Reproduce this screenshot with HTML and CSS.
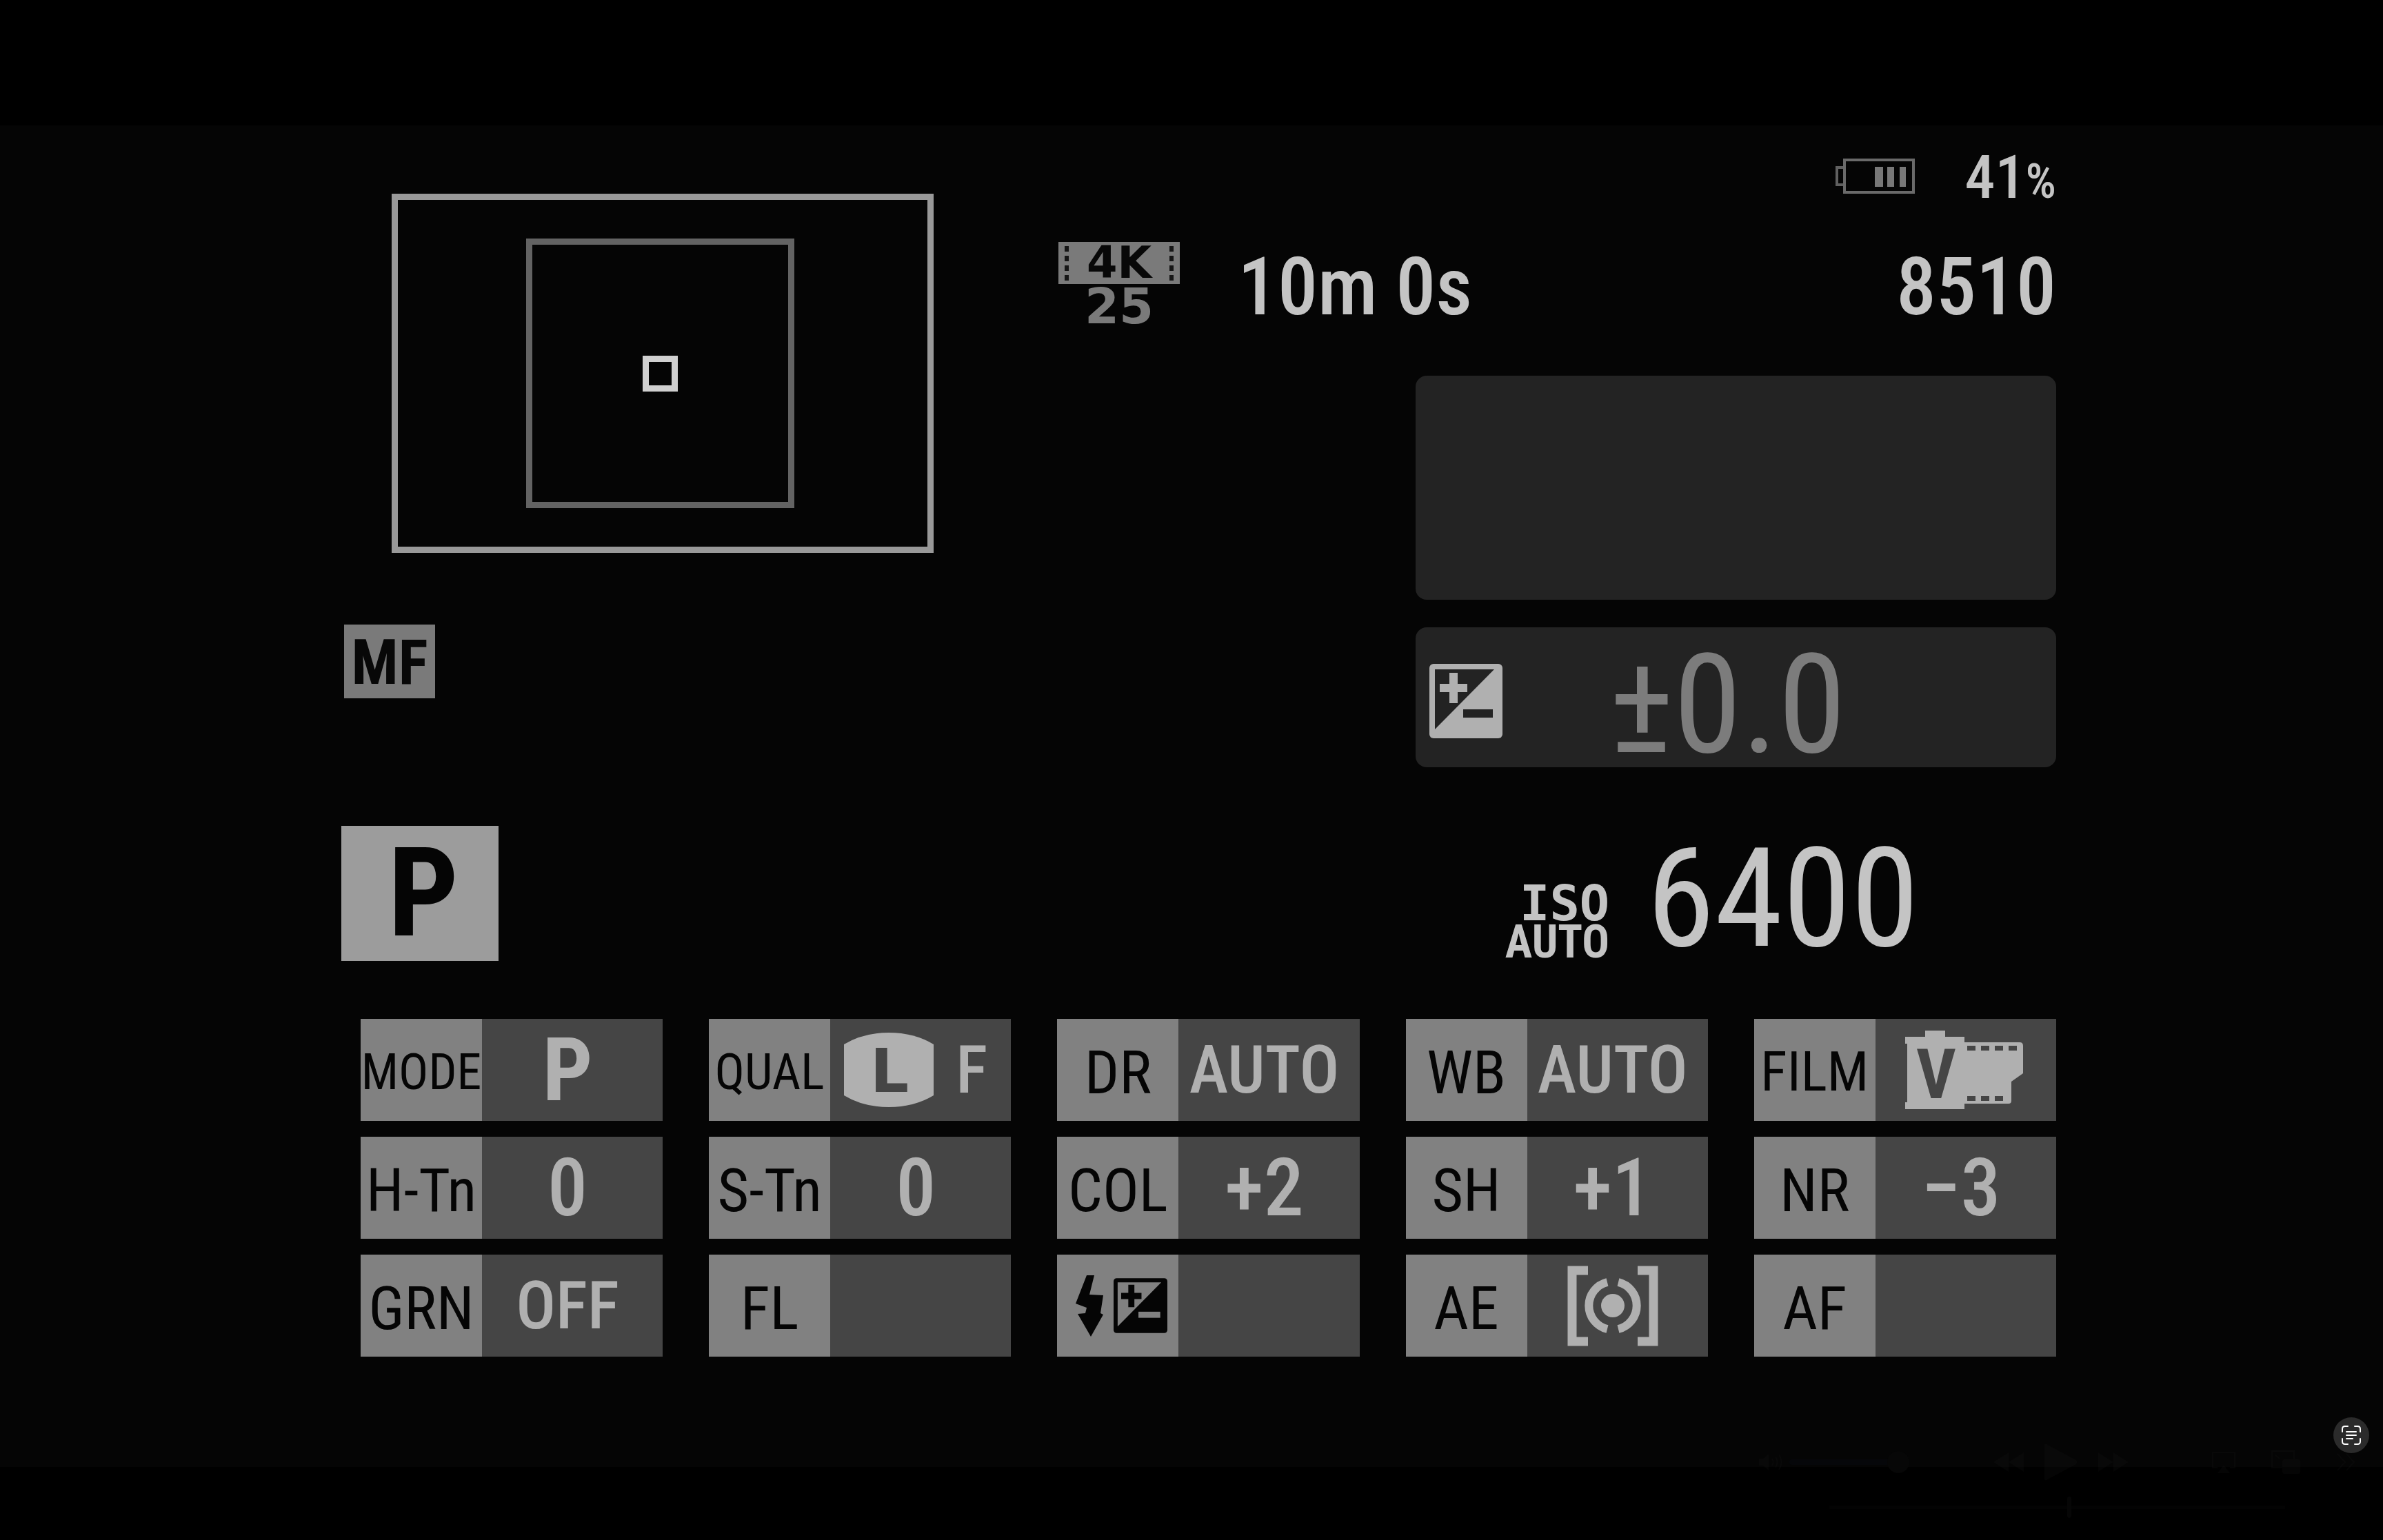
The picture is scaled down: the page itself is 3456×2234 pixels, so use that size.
FILE: index.html
```html
<!DOCTYPE html>
<html lang="en">
<head>
<meta charset="utf-8">
<title>Camera info display</title>
<link rel="stylesheet" href="styles.css">
</head>
<body>
<svg class="defs" aria-hidden="true">
  <symbol id="ev" viewBox="0 0 106 108">
    <rect width="106" height="108" rx="6" fill="currentColor"/>
    <path class="hole" d="M8 8H94L8 95Z"/>
    <path d="M15 35H55M35 13V57" stroke="currentColor" stroke-width="12"/>
    <rect class="hole" x="49" y="66" width="43" height="12"/>
  </symbol>
</svg>

<main class="screen">
  <section class="upper">
    <div class="focus">
      <div class="frame"><div class="frame-inner"><div class="frame-point"></div></div></div>
      <div class="mf">MF</div>
    </div>
    <div class="readouts">
      <div class="battery-row">
        <svg class="battery" width="116" height="54" viewBox="0 0 116 54" fill="none" role="img" aria-label="Battery">
          <path d="M14 14H3V39H14" stroke="#606060" stroke-width="4"/>
          <rect x="14" y="3" width="100" height="47" stroke="#6a6a6a" stroke-width="4"/>
          <path d="M58 13h12v29h-12zM76 13h10v29h-10zM94 13h9v29h-9z" fill="#787878"/>
        </svg>
        <div class="charge">41<span class="percent">%</span></div>
      </div>
      <div class="record-row">
        <div class="movie">
          <div class="movie-badge">
            <svg width="6" height="50" viewBox="0 0 6 50"><path d="M0 0h6v8H0zM0 14h6v8H0zM0 28h6v8H0zM0 42h6v8H0z" fill="#161616"/></svg>
            <span>4K</span>
            <svg width="6" height="50" viewBox="0 0 6 50"><path d="M0 0h6v8H0zM0 14h6v8H0zM0 28h6v8H0zM0 42h6v8H0z" fill="#161616"/></svg>
          </div>
          <div class="movie-rate">25</div>
        </div>
        <div class="remaining">10m 0s</div>
        <div class="shots">8510</div>
      </div>
      <div class="panel panel-histogram"></div>
      <div class="panel panel-ev">
        <svg class="ev-icon" width="106" height="108"><use href="#ev"/></svg>
        <div class="ev-value">±0.0</div>
      </div>
    </div>
  </section>

  <section class="exposure">
    <div class="mode">P</div>
    <div class="iso">
      <div class="iso-label"><span class="iso-name">ISO</span><span class="iso-auto">AUTO</span></div>
      <div class="iso-value">6400</div>
    </div>
  </section>

  <dl class="settings">
    <div class="item"><dt class="compact">MODE</dt><dd class="strong">P</dd></div>
    <div class="item"><dt class="compact">QUAL</dt><dd class="quality">
      <svg width="130" height="108" viewBox="0 0 130 108"><path d="M0 17Q28 0 65 0T130 17V91Q102 108 65 108T0 91Z" fill="#b0b0b0"/><text class="size-letter" x="66" y="86" text-anchor="middle">L</text></svg>
      <span>F</span></dd></div>
    <div class="item"><dt>DR</dt><dd>AUTO</dd></div>
    <div class="item"><dt>WB</dt><dd>AUTO</dd></div>
    <div class="item"><dt class="medium">FILM</dt><dd class="film">
      <svg width="171" height="114" viewBox="0 0 171 114"><path d="M0 9H29V0H58V9H86V17H166Q171 17 171 22V62L154 74V102Q154 106 150 106H86V114H0V104H3V19H0Z" fill="#b0b0b0"/><path d="M90 22h12v7H90zM110 22h12v7h-12zM130 22h12v7h-12zM150 22h12v7h-12zM90 95h12v7H90zM110 95h12v7h-12zM130 95h12v7h-12z" fill="#454545"/><text class="film-letter" x="45" y="98" text-anchor="middle">V</text></svg></dd></div>

    <div class="item"><dt>H-Tn</dt><dd class="number">0</dd></div>
    <div class="item"><dt>S-Tn</dt><dd class="number">0</dd></div>
    <div class="item"><dt>COL</dt><dd class="number">+2</dd></div>
    <div class="item"><dt>SH</dt><dd class="number">+1</dd></div>
    <div class="item"><dt>NR</dt><dd class="number">−3</dd></div>

    <div class="item"><dt>GRN</dt><dd>OFF</dd></div>
    <div class="item"><dt>FL</dt><dd></dd></div>
    <div class="item"><dt class="flash">
      <svg width="40" height="89" viewBox="0 0 40 89"><path d="M16 0H27L20 28L40 29L36 55L40 57L22 89L3 56L14 55L16 47L0 41Z" fill="currentColor"/></svg>
      <svg width="78" height="82"><use href="#ev"/></svg></dt><dd></dd></div>
    <div class="item"><dt>AE</dt><dd>
      <svg width="132" height="115" viewBox="0 0 132 115" fill="none" stroke="#b0b0b0"><path d="M30 6H7V109H30M102 6H125V109H102" stroke-width="13"/><path d="M58 23A35 35 0 0 0 58 91M74 23A35 35 0 0 1 74 91" stroke-width="12"/><circle cx="66" cy="57" r="17" fill="#b0b0b0" stroke="none"/></svg></dd></div>
    <div class="item"><dt>AF</dt><dd></dd></div>
  </dl>
</main>

<section class="player" aria-label="Playback">
  <div class="player-row">
    <div class="volume">
      <svg width="34" height="26" viewBox="0 0 34 26" fill="none" stroke="currentColor" stroke-width="2"><path d="M0 8H6L14 1V25L6 18H0Z" fill="currentColor" stroke="none"/><path d="M19 8Q22 13 19 18M24 5Q29 13 24 21M29 2Q36 13 29 24"/></svg>
      <input class="volume-slider" type="range" min="0" max="100" value="100" aria-label="Volume">
    </div>
    <div class="transport">
      <button aria-label="Rewind"><svg width="44" height="28" viewBox="0 0 44 28"><path d="M22 0V28L0 14ZM44 0V28L22 14Z" fill="currentColor"/></svg></button>
      <button aria-label="Play"><svg width="48" height="54" viewBox="0 0 48 54"><path d="M0 2Q0 0 3 1L46 24Q49 27 46 30L3 53Q0 54 0 52Z" fill="currentColor"/></svg></button>
      <button aria-label="Forward"><svg width="44" height="28" viewBox="0 0 44 28"><path d="M0 0V28L22 14ZM22 0V28L44 14Z" fill="currentColor"/></svg></button>
    </div>
    <div class="extras">
      <button aria-label="AirPlay"><svg width="34" height="32" viewBox="0 0 34 32"><path d="M8 24H1V2H33V24H26" fill="none" stroke="currentColor" stroke-width="2"/><path d="M17 20L26 32H8Z" fill="currentColor"/></svg></button>
      <button aria-label="Picture in picture"><svg width="42" height="34" viewBox="0 0 42 34"><path d="M16 25H1V1H33V12M5 6L12 12" fill="none" stroke="currentColor" stroke-width="2"/><rect x="16" y="13" width="26" height="21" rx="3" fill="currentColor"/></svg></button>
      <button aria-label="More"><svg width="28" height="28" viewBox="0 0 28 28"><path d="M2 2L13 14L2 26M15 2L26 14L15 26" fill="none" stroke="currentColor" stroke-width="2"/></svg></button>
    </div>
  </div>
  <div class="player-row timeline">
    <span>02:00</span>
    <input class="seek" type="range" min="0" max="228" value="120" aria-label="Position">
    <span>03:48</span>
  </div>
</section>

<button class="scan" aria-label="Scan text">
  <svg width="28" height="28" viewBox="0 0 28 28" fill="none" stroke="#fff" stroke-width="2" stroke-linecap="round"><path d="M1 9V5Q1 1 5 1H9M19 1H23Q27 1 27 5V9M27 19V23Q27 27 23 27H19M9 27H5Q1 27 1 23V19M7 9H21M7 14H21M7 19H16"/></svg>
</button>
</body>
</html>
```
FILE: styles.css
```css
:root {
  --narrow: "Roboto Condensed", "Liberation Sans Narrow", "DejaVu Sans Condensed", sans-serif;
  --wide: "DejaVu Sans", sans-serif;
  --hole: #232323;
}

* {
  box-sizing: border-box;
}

body {
  position: relative;
  display: flex;
  flex-direction: column;
  min-height: 100vh;
  margin: 0;
  padding: 182px 0 108px;
  background: #000;
  color: #c4c4c4;
  font-family: var(--narrow);
}

.defs {
  position: absolute;
  width: 0;
  height: 0;
}

.hole {
  fill: var(--hole);
}

button {
  display: block;
  padding: 0;
  border: 0;
  background: none;
  color: inherit;
}

svg {
  display: block;
  flex: none;
  overflow: visible;
}

.screen {
  flex: 1;
  padding: 24px 474px 160px 495px;
  background: #050505;
}

.upper {
  display: flex;
  gap: 180px;
}

.focus {
  flex: none;
  padding-top: 75px;
}

.frame,
.frame-inner {
  display: flex;
  align-items: center;
  justify-content: center;
}

.frame {
  width: 786px;
  height: 521px;
  margin: 0 1px 0 73px;
  padding-right: 8px;
  border: 9px solid #999;
}

.frame-inner {
  width: 389px;
  height: 391px;
  border: 9px solid #636363;
}

.frame-point {
  width: 51px;
  height: 52px;
  border: 9px solid #d0d0d0;
}

.mf {
  width: 132px;
  margin: 104px 0 0 4px;
  padding-top: 4px;
  background: #7a7a7a;
  color: #080808;
  font-size: 90px;
  font-weight: 700;
  line-height: 103px;
  text-align: center;
}

.readouts {
  display: flex;
  flex: 1;
  flex-direction: column;
}

.battery-row {
  display: flex;
  align-items: center;
  justify-content: flex-end;
  gap: 72px;
  height: 100px;
}

.charge {
  padding-top: 8px;
  font-size: 88px;
  font-weight: 500;
  line-height: 92px;
}

.percent {
  font-size: 70px;
}

.record-row {
  display: flex;
  align-items: center;
  height: 122px;
  margin-top: 45px;
}

.movie {
  color: #7a7a7a;
  font-family: var(--wide);
  font-weight: 700;
  line-height: 61px;
  text-align: center;
}

.movie-badge {
  display: flex;
  align-items: center;
  justify-content: space-between;
  width: 176px;
  padding: 0 9px;
  background: #7a7a7a;
  color: #080808;
  font-size: 64px;
}

.movie-rate {
  padding-top: 4px;
  font-size: 72px;
  line-height: 57px;
}

.remaining,
.shots {
  padding-top: 8px;
  font-size: 116px;
  font-weight: 500;
  line-height: 114px;
}

.remaining {
  margin-left: 84px;
}

.shots {
  margin-left: auto;
}

.panel {
  align-self: flex-end;
  width: 929px;
  border-radius: 16px;
  background: #232323;
}

.panel-histogram {
  height: 325px;
  margin-top: 72px;
}

.panel-ev {
  display: flex;
  align-items: center;
  height: 203px;
  margin-top: 40px;
  padding: 10px 0 0 20px;
}

.ev-icon {
  color: #b0b0b0;
}

.ev-value {
  margin-left: 154px;
  padding-top: 12px;
  color: #7c7c7c;
  font-size: 200px;
  line-height: 180px;
}

.exposure {
  display: flex;
  justify-content: space-between;
  margin-top: 85px;
}

.mode {
  width: 228px;
  padding-left: 10px;
  background: #9c9c9c;
  color: #050505;
  font-size: 180px;
  font-weight: 700;
  line-height: 196px;
  text-align: center;
}

.iso {
  display: flex;
  align-items: flex-end;
  gap: 54px;
  margin-right: 199px;
}

.iso-label {
  display: grid;
  justify-items: end;
  font-weight: 700;
}

.iso-name {
  font-family: "DejaVu Sans Mono", monospace;
  font-size: 72px;
  line-height: 60px;
}

.iso-auto {
  font-size: 66px;
  line-height: 54px;
}

.iso-value {
  font-size: 200px;
  line-height: 180px;
}

.settings {
  display: grid;
  grid-template-columns: repeat(5, 1fr);
  gap: 23px 67px;
  margin: 84px 0 0 28px;
}

.item {
  display: flex;
  height: 148px;
}

dt,
dd {
  display: flex;
  align-items: center;
  justify-content: center;
  margin: 0;
}

dt {
  width: 176px;
  padding-top: 6px;
  background: #818181;
  color: #050505;
  font-size: 88px;
}

.medium {
  font-size: 80px;
}

.compact {
  font-size: 72px;
}

dd {
  flex: 1;
  padding-right: 14px;
  background: #454545;
  color: #b0b0b0;
  font-size: 96px;
  font-weight: 500;
}

.number {
  font-size: 116px;
}

.strong {
  font-size: 128px;
  font-weight: 700;
}

.quality {
  gap: 32px;
}

.film {
  padding-right: 4px;
}

.size-letter {
  fill: #454545;
  font-family: var(--wide);
  font-size: 88px;
  font-weight: 700;
}

.film-letter {
  fill: #454545;
  font-size: 100px;
  font-weight: 700;
}

.flash {
  --hole: #818181;
  gap: 15px;
  padding: 0 0 0 10px;
}

.player {
  position: absolute;
  right: 16px;
  bottom: 18px;
  width: 913px;
  padding: 21px 24px 16px;
  border-radius: 20px;
  color: rgba(255, 255, 255, 0.02);
}

.player-row {
  display: flex;
  align-items: center;
  justify-content: space-between;
}

.volume,
.transport,
.extras {
  display: flex;
  align-items: center;
}

.volume {
  gap: 10px;
}

.transport {
  gap: 30px;
}

.extras {
  gap: 52px;
}

.volume-slider,
.seek {
  margin: 0;
  appearance: none;
  background: rgba(255, 255, 255, 0.01);
}

.volume-slider {
  width: 174px;
  height: 8px;
  border-radius: 4px;
  background: #06070a;
}

.volume-slider::-webkit-slider-thumb {
  width: 32px;
  height: 32px;
  border-radius: 16px;
  appearance: none;
  background: #070707;
}

.timeline {
  gap: 32px;
  margin-top: 22px;
  font-family: Inter, sans-serif;
  font-size: 25px;
  line-height: 32px;
}

.seek {
  flex: 1;
  height: 5px;
}

.seek::-webkit-slider-thumb {
  width: 6px;
  height: 31px;
  border-radius: 3px;
  appearance: none;
  background: #060606;
}

.scan {
  position: absolute;
  right: 20px;
  bottom: 128px;
  display: grid;
  place-items: center;
  width: 52px;
  height: 52px;
  border-radius: 26px;
  background: #2b2b2b;
}
```
